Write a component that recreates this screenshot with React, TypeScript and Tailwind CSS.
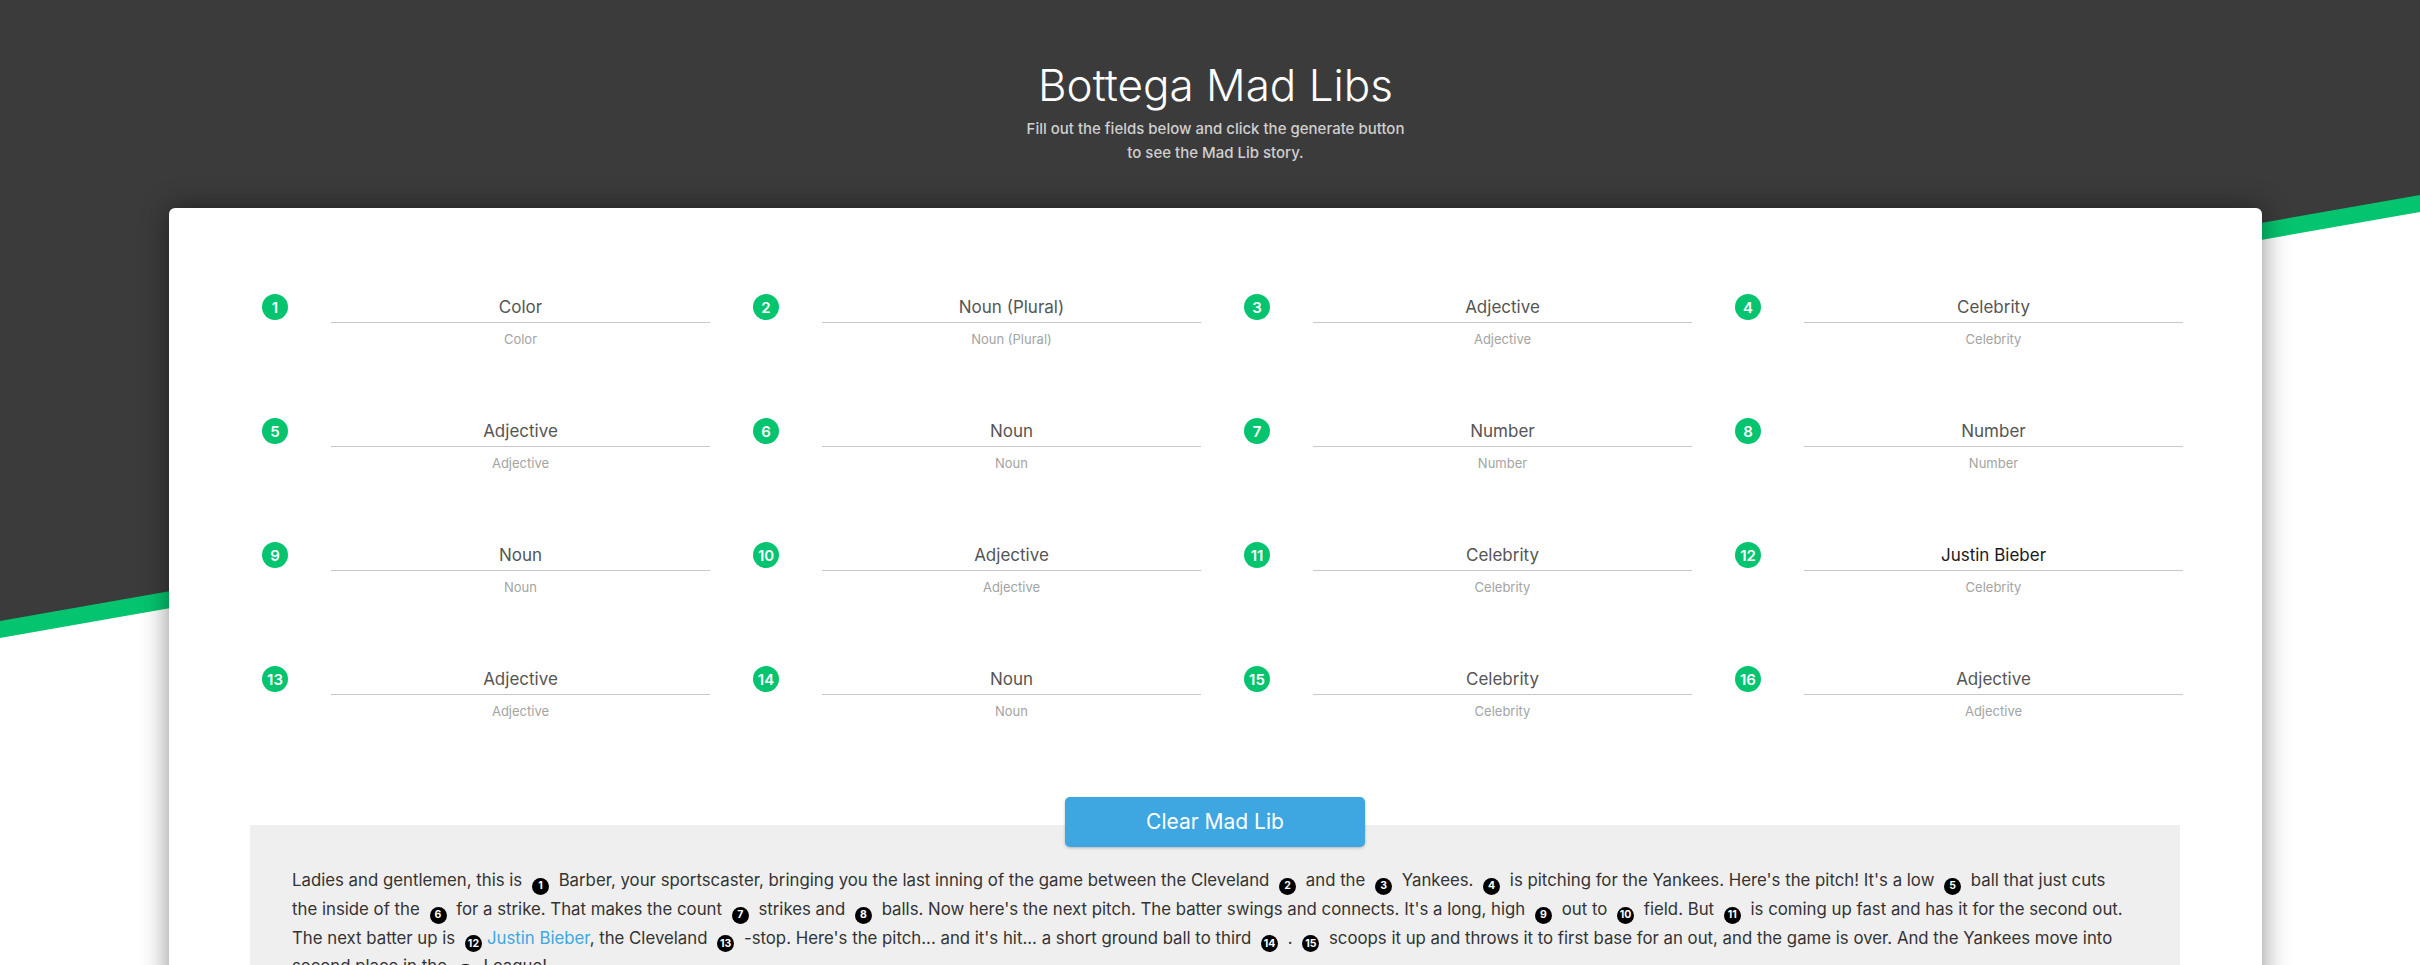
import React from "react";

type Field = { n: number; label: string; value?: string };

const fields: Field[] = [
  { n: 1, label: "Color" },
  { n: 2, label: "Noun (Plural)" },
  { n: 3, label: "Adjective" },
  { n: 4, label: "Celebrity" },
  { n: 5, label: "Adjective" },
  { n: 6, label: "Noun" },
  { n: 7, label: "Number" },
  { n: 8, label: "Number" },
  { n: 9, label: "Noun" },
  { n: 10, label: "Adjective" },
  { n: 11, label: "Celebrity" },
  { n: 12, label: "Celebrity", value: "Justin Bieber" },
  { n: 13, label: "Adjective" },
  { n: 14, label: "Noun" },
  { n: 15, label: "Celebrity" },
  { n: 16, label: "Adjective" },
];

function GreenBadge({ n }: { n: number }) {
  return (
    <div className="mt-[2px] flex h-[26px] w-[26px] shrink-0 items-center justify-center rounded-full bg-[#05c46f] text-[15px] font-semibold leading-none text-white">
      {n}
    </div>
  );
}

function FieldItem({ f }: { f: Field }) {
  return (
    <div className="flex items-start">
      <GreenBadge n={f.n} />
      <div className="ml-[43px] flex flex-1 flex-col items-center">
        <input
          readOnly
          defaultValue={f.value}
          placeholder={f.label}
          className="h-[31px] w-full border-b-[1.5px] border-[#c8c8c8] bg-transparent text-center text-[17px] text-[#1a1a1a] outline-none placeholder:text-[#555555]"
        />
        <div className="mt-[8px] text-[13px] leading-[16px] text-[#a3a3a3]">{f.label}</div>
      </div>
    </div>
  );
}

function B({ n }: { n: number }) {
  return (
    <span className="mx-[5px] inline-flex h-[17px] w-[17px] items-center justify-center rounded-full bg-black align-[-3px] text-[10.5px] font-bold leading-none tracking-normal text-white">
      {n}
    </span>
  );
}

export default function App() {
  return (
    <div className="relative min-h-screen overflow-hidden bg-white font-['Inter','Noto_Sans',sans-serif]">
      <div className="absolute inset-x-0 top-0 h-[700px] bg-[#05c46f] [clip-path:polygon(0_0,100%_0,100%_212px,0_638px)]" />
      <div className="absolute inset-x-0 top-0 h-[700px] bg-[#3b3b3b] [clip-path:polygon(0_0,100%_0,100%_195px,0_621px)]" />

      <div className="relative ml-[169px] w-[2093px]">
        <header className="flex flex-col items-center pt-[56px]">
          <h1 className="text-[44px] font-light leading-[58px] text-white">Bottega Mad Libs</h1>
          <p className="mt-[3px] text-center text-[15px] font-medium leading-[24px] text-[#cfcfcf]">
            Fill out the fields below and click the generate button
            <br />
            to see the Mad Lib story.
          </p>
        </header>

        <main className="mt-[43px] rounded-[6px] bg-white pb-[80px] pt-[84px] shadow-[0_0_28px_rgba(0,0,0,0.45)]">
          <div className="ml-[93px] mr-[79px] grid grid-cols-4 gap-x-[43px] gap-y-[69px]">
            {fields.map((f) => (
              <FieldItem key={f.n} f={f} />
            ))}
          </div>

          <div className="ml-[81px] mr-[82px] mt-[78px]">
            <div className="flex justify-center">
              <button className="relative z-10 -mb-[22px] h-[50px] w-[300px] rounded-[5px] bg-[#3ea7e1] text-[21px] text-white shadow-[0_1px_3px_rgba(0,0,0,0.25)]">
                Clear Mad Lib
              </button>
            </div>
            <div className="bg-[#efefef] px-[42px] pb-[40px] pt-[41px] text-[16.8px] leading-[28px] text-[#333333]">
              <span className="block whitespace-nowrap">
                Ladies and gentlemen, this is <B n={1} /> Barber, your sportscaster, bringing you the last inning of the
                game between the Cleveland <B n={2} /> and the <B n={3} /> Yankees. <B n={4} /> is pitching for the
                Yankees. Here's the pitch! It's a low <B n={5} /> ball that just cuts
              </span>
              <span className="block whitespace-nowrap">
                the inside of the <B n={6} /> for a strike. That makes the count <B n={7} /> strikes and <B n={8} /> balls.
                Now here's the next pitch. The batter swings and connects. It's a long, high <B n={9} /> out to{" "}
                <B n={10} /> field. But <B n={11} /> is coming up fast and has it for the second out.
              </span>
              <span className="block whitespace-nowrap">
                The next batter up is <B n={12} />
                <span className="text-[#3ea7e1]">Justin Bieber</span>, the Cleveland <B n={13} /> -stop. Here's the
                pitch... and it's hit... a short ground ball to third <B n={14} /> . <B n={15} /> scoops it up and throws
                it to first base for an out, and the game is over. And the Yankees move into
              </span>
              <span className="block whitespace-nowrap">
                second place in the <B n={16} /> League!
              </span>
            </div>
          </div>
        </main>
      </div>
    </div>
  );
}
